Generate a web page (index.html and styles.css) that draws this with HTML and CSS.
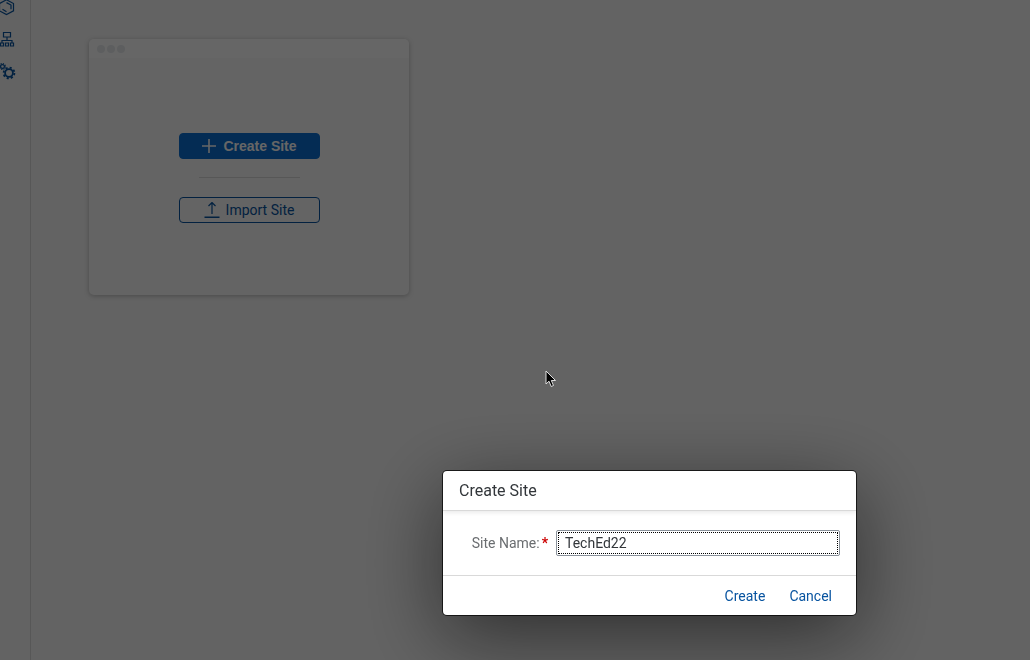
FILE: index.html
```html
<!DOCTYPE html>
<html lang="en">
<head>
<meta charset="utf-8">
<title>Create Site</title>
<link rel="stylesheet" href="styles.css">
</head>
<body>
<div class="app">
  <nav class="sidebar" aria-label="Main">
    <a href="#content" class="nav-link" aria-label="Content"><svg class="nav-icon" viewBox="0 0 16 16"><path d="M6.500 -.2 13.500 3.500v7.300L6.500 14.500 -.5 10.800V3.500z"/><path d="M6.500 2.600 11 5v4.300M2.500 9.300 6.500 11.700"/></svg></a>
    <a href="#sites" class="nav-link" aria-label="Site Directory"><svg class="nav-icon" viewBox="0 0 16 16"><path d="M3.500 .5h7v4.500h-7zM7 5v3.500M2 11V8.500h10V11M.5 11h3v3h-3zM5.500 11h3v3h-3zM10.500 11h3v3h-3z"/></svg></a>
    <a href="#settings" class="nav-link" aria-label="Settings"><svg class="nav-icon" viewBox="0 0 16 16"><circle cx="9" cy="9" r="3.900" stroke-width="1.800"/><circle cx="9" cy="9" r="5.400" stroke-width="1.800" stroke-dasharray="2.120 2.120"/><circle cx="2.500" cy="2.500" r="1.900"/><circle cx="2.500" cy="2.500" r="2.900" stroke-width="1.200" stroke-dasharray="1.138 1.138"/></svg></a>
  </nav>
  <main class="content">
    <section class="card">
      <div class="card-bar"><span class="dot"></span><span class="dot"></span><span class="dot"></span></div>
      <div class="card-body">
        <button type="button" class="btn btn-primary"><svg class="btn-icon" viewBox="0 0 16 16"><path d="M8 1v14M1 8h14" stroke-width="1.600"/></svg>Create Site</button>
        <hr class="divider">
        <button type="button" class="btn btn-outline"><svg class="btn-icon" viewBox="0 0 16 16"><path d="M8 12V.5M4.500 4 8 .5 11.500 4"/><path d="M.5 15.300h15" stroke-width="1.600"/></svg>Import Site</button>
      </div>
    </section>
  </main>
</div>
<div class="backdrop"></div>
<form class="dialog" role="dialog" aria-labelledby="dialog-title">
  <header class="dialog-header"><h1 class="dialog-title" id="dialog-title">Create Site</h1></header>
  <div class="dialog-body">
    <label class="label" for="site-name">Site Name:<span class="required">*</span></label>
    <input class="input" id="site-name" type="text" value="TechEd22" required>
  </div>
  <footer class="dialog-footer">
    <button type="button" class="btn-text">Create</button>
    <button type="button" class="btn-text">Cancel</button>
  </footer>
</form>
<svg class="cursor" viewBox="0 0 12 18" aria-hidden="true"><path d="M1 1v13l3-2.800 2.200 5.300 2.300-1-2.200-5H10.500z"/></svg>
</body>
</html>
```
FILE: styles.css
```css
* {
  box-sizing: border-box;
}

body {
  margin: 0;
  background: #f7f7f7;
  color: #32363a;
  font-family: Roboto, "Liberation Sans", sans-serif;
  font-size: 14px;
}

button,
input {
  font: inherit;
}

.app {
  display: flex;
  min-height: 100vh;
}

.sidebar {
  display: flex;
  flex-direction: column;
  gap: 16px;
  width: 31px;
  border-right: 1px solid #d9d9d9;
}

.nav-link {
  display: block;
  height: 16px;
}

.nav-icon {
  display: block;
  width: 16px;
  height: 16px;
  overflow: visible;
  fill: none;
  stroke: #0854a0;
  stroke-width: 1.2;
}

.content {
  flex: 1;
  padding: 39px 58px;
}

.card {
  width: 320px;
  border-radius: 5px;
  background: #f9f9f9;
  box-shadow: 0 1px 5px rgba(0, 0, 0, 0.25);
}

.card-bar {
  display: flex;
  align-items: center;
  gap: 2px;
  height: 19px;
  padding: 1px 8px 0;
  border-radius: 5px 5px 0 0;
  background: #fff;
}

.dot {
  width: 8px;
  height: 8px;
  border-radius: 50%;
  background: #e8ebee;
}

.card-body {
  display: flex;
  flex-direction: column;
  align-items: center;
  padding: 75px 0 72px;
}

.btn {
  display: flex;
  align-items: center;
  justify-content: center;
  gap: 6px;
  width: 141px;
  height: 26px;
  padding: 0;
  border: 1px solid #0854a0;
  border-radius: 4px;
}

.btn-primary {
  border-color: #0a6ed1;
  background: #0a6ed1;
  color: #fff;
  font-family: "Liberation Sans", sans-serif;
  font-weight: 700;
}

.btn-outline {
  background: transparent;
  color: #0854a0;
}

.btn-icon {
  width: 16px;
  height: 16px;
  fill: none;
  stroke: currentColor;
  stroke-width: 1.2;
}

.divider {
  width: 101px;
  margin: 18px 0 19px;
  border: 0;
  border-top: 1px solid #d9d9d9;
}

.backdrop {
  position: fixed;
  inset: 0;
  background: rgba(0, 0, 0, 0.6);
}

.dialog {
  position: fixed;
  top: 471px;
  left: 443px;
  width: 413px;
  border-radius: 4px;
  background: #fff;
  box-shadow: 0 0 0 1px rgba(0, 0, 0, 0.72), 0 20px 80px rgba(0, 0, 0, 0.55);
}

.dialog-header {
  display: flex;
  align-items: center;
  height: 40px;
  padding: 0 16px;
  border-bottom: 1px solid #d9d9d9;
  box-shadow: 0 2px 4px rgba(0, 0, 0, 0.08);
}

.dialog-title {
  margin: 0;
  font-size: 16px;
  font-weight: 400;
}

.dialog-body {
  display: flex;
  align-items: center;
  gap: 8px;
  padding: 19px 16px;
}

.label {
  display: flex;
  justify-content: flex-end;
  gap: 2px;
  width: 89px;
  color: #6a6d70;
}

.required {
  color: #c00;
  font-weight: 700;
}

.input {
  flex: 1;
  min-width: 0;
  height: 26px;
  padding: 0 8px;
  border: 1px solid #89919a;
  border-radius: 2px;
  outline: 1px dotted #000;
  outline-offset: -3px;
  background: #fff;
  color: #32363a;
}

.dialog-footer {
  display: flex;
  align-items: center;
  justify-content: flex-end;
  gap: 8px;
  height: 40px;
  padding: 0 16px;
  border-top: 1px solid #d9d9d9;
}

.btn-text {
  height: 26px;
  padding: 0 8px;
  border: 0;
  background: transparent;
  color: #0854a0;
}

.cursor {
  position: fixed;
  top: 370px;
  left: 545px;
  width: 12px;
  height: 18px;
  fill: #000;
  stroke: #ddd;
  stroke-width: 1;
}
```
